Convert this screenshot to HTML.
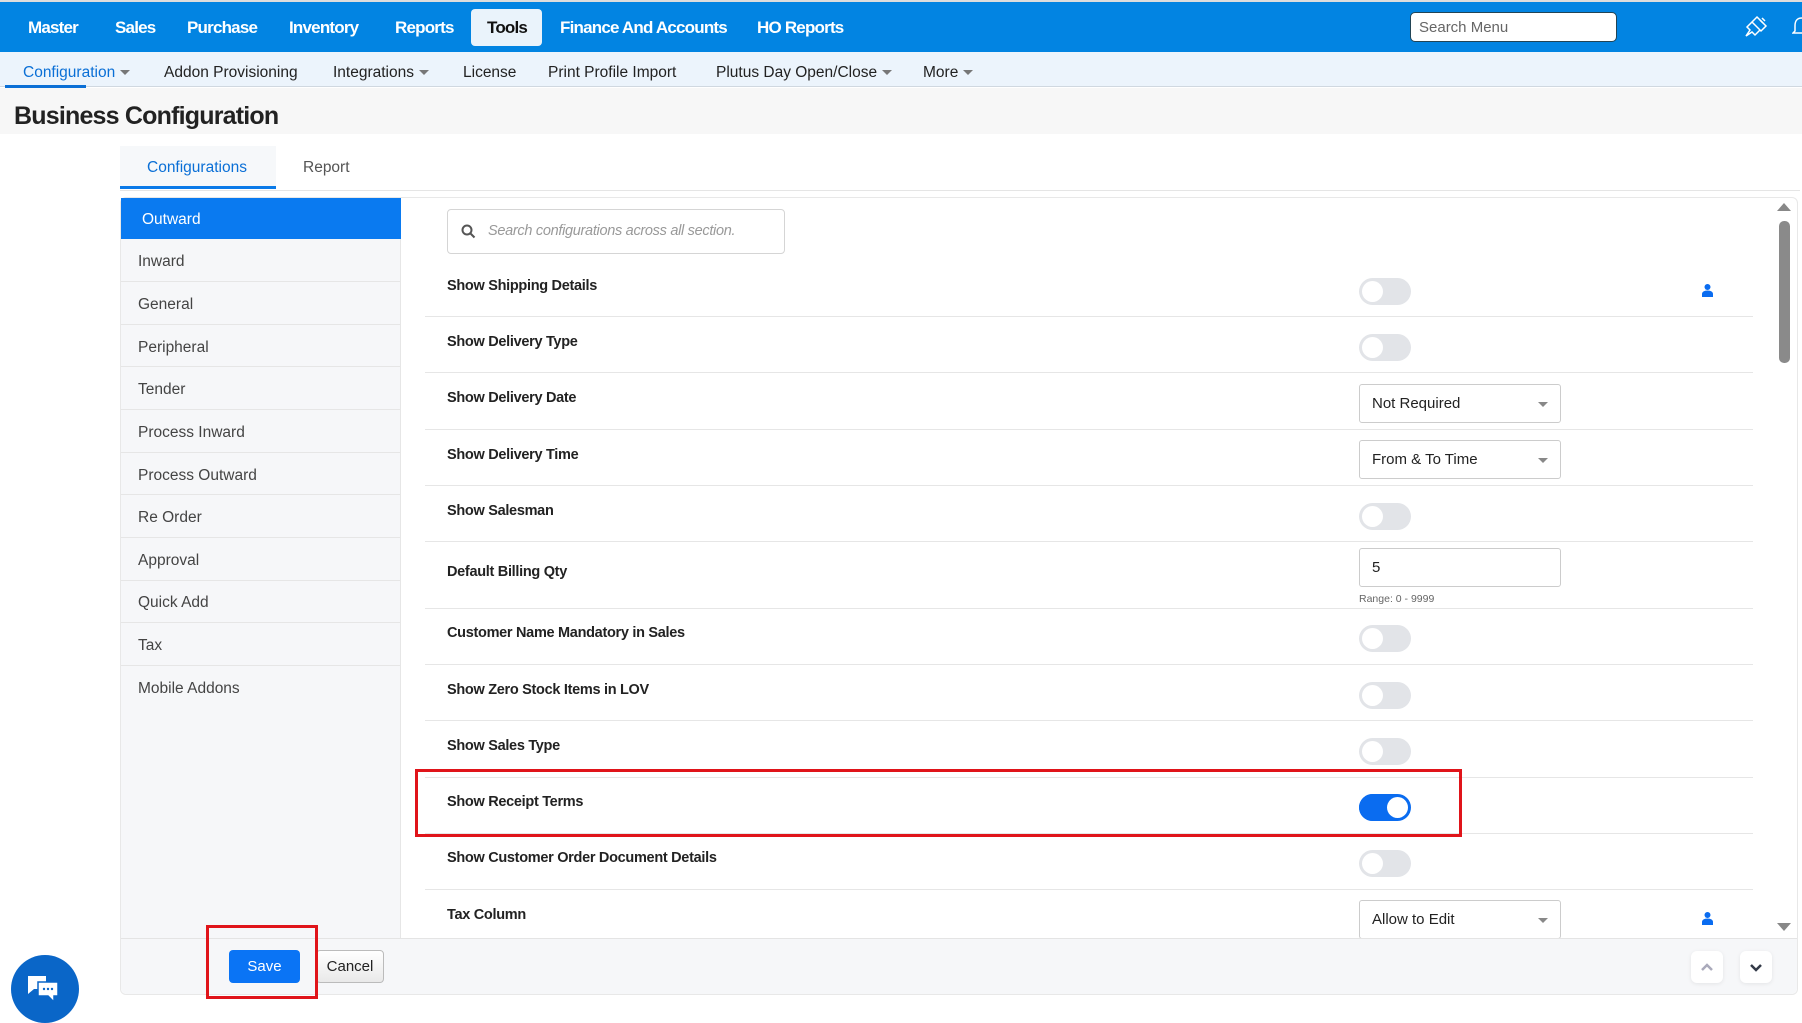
<!DOCTYPE html>
<html><head><meta charset="utf-8"><style>
*{box-sizing:border-box;margin:0;padding:0}
body{width:1802px;height:1008px;overflow:hidden;background:#fff;font-family:"Liberation Sans",sans-serif;position:relative;color:#222}
.a{position:absolute;white-space:nowrap}
.top{left:0;top:0;width:1802px;height:52px;background:#0284e2;border-top:2px solid #ddd}
.nav{top:18px;color:#fff;font-weight:bold;font-size:17px;letter-spacing:-0.8px}
.sub{left:0;top:52px;width:1802px;height:35px;background:#ecf4fc;border-bottom:1px solid #d0d8e0}
.sn{top:64px;font-size:15.5px;color:#222;letter-spacing:0}
.car{display:inline-block;width:0;height:0;border-left:5px solid transparent;border-right:5px solid transparent;border-top:5px solid #777;margin-left:5px;vertical-align:middle}
.side{font-size:15.5px;color:#444;left:138px}
.sep{height:1px;background:#e6e6e6}
.lbl{left:447px;font-weight:bold;font-size:14.5px;color:#222;letter-spacing:-0.3px}
.tg{left:1359px;width:52px;height:27px;border-radius:14px;background:#e2e4e8}
.tg::after{content:"";position:absolute;left:3px;top:3px;width:21px;height:21px;border-radius:50%;background:#fff}
.dd{left:1359px;width:202px;height:39px;border:1px solid #ccc;border-radius:3px;background:#fff;font-size:15px;padding:10px 12px;color:#222}
.dd.c::after{content:"";position:absolute;right:12px;top:17px;border-left:5px solid transparent;border-right:5px solid transparent;border-top:5px solid #888}
.usr{width:11px;height:13px}
</style></head><body>
<div class="a top"></div>
<div class="a nav" style="left:28px">Master</div>
<div class="a nav" style="left:115px">Sales</div>
<div class="a nav" style="left:187px">Purchase</div>
<div class="a nav" style="left:289px">Inventory</div>
<div class="a nav" style="left:395px">Reports</div>
<div class="a" style="left:471px;top:9px;width:71px;height:37px;background:#eaf3fb;border-radius:4px"></div>
<div class="a nav" style="left:487px;color:#111">Tools</div>
<div class="a nav" style="left:560px">Finance And Accounts</div>
<div class="a nav" style="left:757px">HO Reports</div>
<div class="a" style="left:1410px;top:12px;width:207px;height:30px;background:#fff;border:1px solid #245;border-radius:5px;font-size:15px;color:#666;padding:6px 8px">Search Menu</div>
<svg class="a" style="left:1743px;top:14px" width="26" height="26" viewBox="0 0 26 26" fill="none" stroke="#fff" stroke-width="1.5"><path d="M14 3l9 9-5 5-9-9z M9 8l-5 5 3 3 -4 6 6-4 3 3 5-5"/><path d="M17 6l3 3M19 4l3 3"/></svg>
<svg class="a" style="left:1792px;top:14px" width="12" height="24" viewBox="0 0 12 24" fill="none" stroke="#fff" stroke-width="1.5"><path d="M10 4C4 4 3 8 3 12v5l-2 2h11"/></svg>

<div class="a sub"></div>
<div class="a sn" style="left:23px;color:#0a6fd6">Configuration<span class="car"></span></div>
<div class="a" style="left:5px;top:85px;width:81px;height:3px;background:#0a6fd6"></div>
<div class="a sn" style="left:164px">Addon Provisioning</div>
<div class="a sn" style="left:333px">Integrations<span class="car"></span></div>
<div class="a sn" style="left:463px">License</div>
<div class="a sn" style="left:548px">Print Profile Import</div>
<div class="a sn" style="left:716px">Plutus Day Open/Close<span class="car"></span></div>
<div class="a sn" style="left:923px">More<span class="car"></span></div>

<div class="a" style="left:0;top:88px;width:1802px;height:46px;background:#f7f7f7"></div>
<div class="a" style="left:14px;top:102px;font-size:25px;font-weight:bold;color:#222;letter-spacing:-0.8px">Business Configuration</div>

<div class="a" style="left:120px;top:146px;width:156px;height:43px;background:#f6f8fa;border-bottom:3px solid #0a7ae8"></div>
<div class="a" style="left:147px;top:159px;font-size:15.5px;color:#0a6fd6">Configurations</div>
<div class="a" style="left:303px;top:159px;font-size:15.5px;color:#555">Report</div>
<div class="a" style="left:120px;top:190px;width:1680px;height:1px;background:#e5e5e5"></div>

<div class="a" style="left:120px;top:197px;width:1678px;height:798px;border:1px solid #e8e8e8;border-radius:6px;background:#fff"></div>
<div class="a" style="left:121px;top:198px;width:280px;height:740px;background:#f6f7f9;border-right:1px solid #e6e6e6"></div>
<div class="a" style="left:121px;top:198px;width:280px;height:41px;background:#0a7af0"></div>
<div class="a side" style="left:142px;top:211px;color:#fff">Outward</div>
<div class="a side" style="top:253px">Inward</div><div class="a sep" style="left:121px;top:281px;width:280px"></div>
<div class="a side" style="top:296px">General</div><div class="a sep" style="left:121px;top:324px;width:280px"></div>
<div class="a side" style="top:339px">Peripheral</div><div class="a sep" style="left:121px;top:366px;width:280px"></div>
<div class="a side" style="top:381px">Tender</div><div class="a sep" style="left:121px;top:409px;width:280px"></div>
<div class="a side" style="top:424px">Process Inward</div><div class="a sep" style="left:121px;top:452px;width:280px"></div>
<div class="a side" style="top:467px">Process Outward</div><div class="a sep" style="left:121px;top:494px;width:280px"></div>
<div class="a side" style="top:509px">Re Order</div><div class="a sep" style="left:121px;top:537px;width:280px"></div>
<div class="a side" style="top:552px">Approval</div><div class="a sep" style="left:121px;top:580px;width:280px"></div>
<div class="a side" style="top:594px">Quick Add</div><div class="a sep" style="left:121px;top:622px;width:280px"></div>
<div class="a side" style="top:637px">Tax</div><div class="a sep" style="left:121px;top:665px;width:280px"></div>
<div class="a side" style="top:680px">Mobile Addons</div>

<div class="a" style="left:447px;top:209px;width:338px;height:45px;border:1px solid #d5d5d5;border-radius:4px"></div>
<svg class="a" style="left:461px;top:224px" width="15" height="15" viewBox="0 0 15 15" fill="none" stroke="#555" stroke-width="2"><circle cx="6" cy="6" r="4.5"/><path d="M9.5 9.5l4 4"/></svg>
<div class="a" style="left:488px;top:223px;font-size:14.5px;font-style:italic;color:#999;letter-spacing:-0.3px">Search configurations across all section.</div>

<div class="a lbl" style="top:278px">Show Shipping Details</div>
<div class="a tg" style="top:278px"></div>
<div class="a sep" style="left:425px;top:316px;width:1328px"></div>
<div class="a lbl" style="top:334px">Show Delivery Type</div>
<div class="a tg" style="top:334px"></div>
<div class="a sep" style="left:425px;top:372px;width:1328px"></div>
<div class="a lbl" style="top:390px">Show Delivery Date</div>
<div class="a dd c" style="top:384px">Not Required</div>
<div class="a sep" style="left:425px;top:429px;width:1328px"></div>
<div class="a lbl" style="top:447px">Show Delivery Time</div>
<div class="a dd c" style="top:440px">From &amp; To Time</div>
<div class="a sep" style="left:425px;top:485px;width:1328px"></div>
<div class="a lbl" style="top:503px">Show Salesman</div>
<div class="a tg" style="top:503px"></div>
<div class="a sep" style="left:425px;top:541px;width:1328px"></div>
<div class="a lbl" style="top:564px">Default Billing Qty</div>
<div class="a dd" style="top:548px">5</div>
<div class="a" style="left:1359px;top:593px;font-size:10.5px;color:#666">Range: 0 - 9999</div>
<div class="a sep" style="left:425px;top:608px;width:1328px"></div>
<div class="a lbl" style="top:625px">Customer Name Mandatory in Sales</div>
<div class="a tg" style="top:625px"></div>
<div class="a sep" style="left:425px;top:664px;width:1328px"></div>
<div class="a lbl" style="top:682px">Show Zero Stock Items in LOV</div>
<div class="a tg" style="top:682px"></div>
<div class="a sep" style="left:425px;top:720px;width:1328px"></div>
<div class="a lbl" style="top:738px">Show Sales Type</div>
<div class="a tg" style="top:738px"></div>
<div class="a sep" style="left:425px;top:777px;width:1328px"></div>
<div class="a lbl" style="top:794px">Show Receipt Terms</div>
<div class="a tg" style="top:794px;background:#0a6cf0"></div>
<div class="a" style="left:1387px;top:797px;width:21px;height:21px;border-radius:50%;background:#fff"></div>
<div class="a" style="left:1359px;top:794px;width:28px;height:27px;border-radius:14px 0 0 14px;background:#0a6cf0"></div>
<div class="a sep" style="left:425px;top:833px;width:1328px"></div>
<div class="a lbl" style="top:850px">Show Customer Order Document Details</div>
<div class="a tg" style="top:850px"></div>
<div class="a sep" style="left:425px;top:889px;width:1328px"></div>
<div class="a lbl" style="top:907px">Tax Column</div>
<div class="a dd c" style="top:900px">Allow to Edit</div>

<svg class="a usr" style="left:1702px;top:284px" viewBox="0 0 11 13" fill="#0a6cf0"><circle cx="5.5" cy="3" r="3"/><path d="M0 13v-3c0-2 2-3.5 5.5-3.5S11 8 11 10v3z"/></svg>
<svg class="a usr" style="left:1702px;top:912px" viewBox="0 0 11 13" fill="#0a6cf0"><circle cx="5.5" cy="3" r="3"/><path d="M0 13v-3c0-2 2-3.5 5.5-3.5S11 8 11 10v3z"/></svg>

<div class="a" style="left:1777px;top:203px;width:0;height:0;border-left:7px solid transparent;border-right:7px solid transparent;border-bottom:8px solid #888"></div>
<div class="a" style="left:1779px;top:221px;width:11px;height:142px;border-radius:5px;background:#8a8a8a"></div>
<div class="a" style="left:1777px;top:923px;width:0;height:0;border-left:7px solid transparent;border-right:7px solid transparent;border-top:8px solid #888"></div>

<div class="a" style="left:121px;top:938px;width:1676px;height:56px;background:#f6f7f9;border-top:1px solid #e4e4e4;border-radius:0 0 6px 6px"></div>
<div class="a" style="left:229px;top:950px;width:71px;height:33px;background:#0a74f5;border-radius:4px;color:#fff;font-size:15px;text-align:center;line-height:33px">Save</div>
<div class="a" style="left:316px;top:950px;width:68px;height:33px;background:linear-gradient(#fff,#e9e9e9);border:1px solid #bbb;border-radius:4px;font-size:15px;text-align:center;line-height:31px">Cancel</div>
<div class="a" style="left:1691px;top:951px;width:32px;height:32px;background:#fff;border-radius:6px;box-shadow:0 1px 4px rgba(0,0,0,.08)"></div>
<svg class="a" style="left:1699px;top:959px" width="16" height="16" viewBox="0 0 16 16" fill="none" stroke="#aab" stroke-width="2.5"><path d="M3 11l5-5 5 5"/></svg>
<div class="a" style="left:1740px;top:951px;width:32px;height:32px;background:#fff;border-radius:6px;box-shadow:0 1px 4px rgba(0,0,0,.08)"></div>
<svg class="a" style="left:1748px;top:959px" width="16" height="16" viewBox="0 0 16 16" fill="none" stroke="#333a48" stroke-width="2.5"><path d="M3 6l5 5 5-5"/></svg>

<div class="a" style="left:415px;top:769px;width:1047px;height:68px;border:3px solid #e0141a"></div>
<div class="a" style="left:206px;top:925px;width:112px;height:74px;border:3px solid #e0141a"></div>

<div class="a" style="left:11px;top:955px;width:68px;height:68px;border-radius:50%;background:#0a66c8"></div>
<svg class="a" style="left:26px;top:974px" width="40" height="32" viewBox="0 0 40 32"><path d="M2 2h18v13H8l-6 5z" fill="#fff"/><path d="M12 8h20v14h-4v6l-6-6h-10z" fill="#fff" stroke="#0a66c8" stroke-width="1.5"/><circle cx="18" cy="15" r="1.2" fill="#0a66c8"/><circle cx="22" cy="15" r="1.2" fill="#0a66c8"/><circle cx="26" cy="15" r="1.2" fill="#0a66c8"/></svg>
</body></html>
